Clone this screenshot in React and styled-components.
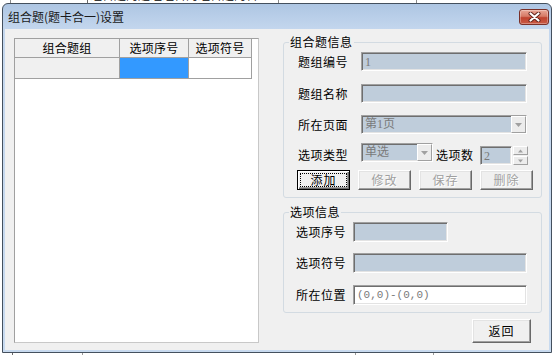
import React from "react";
import styled, { createGlobalStyle } from "styled-components";

const Global = createGlobalStyle`
  html, body { margin: 0; padding: 0; background: #fff; }
  body { font-family: "Noto Sans CJK SC", sans-serif; font-size: 12px; }
  #root { width: 554px; height: 355px; }
`;

const Page = styled.div`
  width: 554px;
  height: 355px;
  overflow: hidden;
  background: #fff;
  display: flex;
  flex-direction: column;
`;

const BackStrip = styled.div`
  flex: none;
  height: ${(p) => p.$h}px;
  display: flex;
  align-items: ${(p) => (p.$bottom ? "flex-end" : "flex-start")};
  overflow: hidden;
`;

const Tick = styled.span`
  flex: none;
  width: 1px;
  height: 100%;
  background: ${(p) => p.$c || "#6a6a6a"};
  margin-left: ${(p) => p.$ml}px;
`;

const BackText = styled.span`
  flex: none;
  width: ${(p) => p.$w}px;
  margin-left: ${(p) => p.$ml}px;
  height: 16px;
  line-height: 16px;
  font-size: 12px;
  color: #000;
  white-space: nowrap;
  overflow: hidden;
`;

const Window = styled.div`
  flex: none;
  margin-left: 2px;
  width: 550px;
  height: 350px;
  box-sizing: border-box;
  border: 1px solid #44505e;
  border-radius: 6px 6px 0 0;
  background: linear-gradient(#aec6e3, #c4d7ee 26px, #c8daef);
  padding: 0 2px 2px;
  display: flex;
  flex-direction: column;
`;

const TitleBar = styled.div`
  flex: none;
  height: 25px;
  display: flex;
  align-items: center;
  justify-content: space-between;
  padding-left: 3px;
`;

const TitleText = styled.span`
  font-size: 12px;
  line-height: 16px;
  color: #1a1a1a;
`;

const CloseBtn = styled.div`
  width: 30px;
  height: 16px;
  box-sizing: border-box;
  margin-top: 1px;
  border: 1px solid #7a3028;
  border-radius: 3px;
  background: linear-gradient(#e9a797, #d67a66 45%, #c0432f 55%, #c85a45);
  box-shadow: inset 0 0 0 1px rgba(255, 255, 255, 0.3);
  display: flex;
  align-items: center;
  justify-content: center;
`;

const Client = styled.div`
  flex: none;
  height: 321px;
  background: #f0f0f0;
  box-sizing: border-box;
  padding: 6px 0 0 9px;
  display: flex;
  align-items: flex-start;
  gap: 24px;
`;

const Grid = styled.div`
  flex: none;
  width: 245px;
  height: 305px;
  margin-top: 3px;
  box-sizing: border-box;
  background: #fff;
  border: 1px solid #a0a0a0;
  border-right-color: #c8c8c8;
  border-bottom-color: #c8c8c8;
  display: grid;
  grid-template-columns: 105px 69px 63px;
  grid-template-rows: 19px 21px;
  align-content: start;
`;

const Cell = styled.div`
  box-sizing: border-box;
  background: ${(p) => p.$bg || "#fff"};
  border-right: 1px solid #a0a0a0;
  border-bottom: 1px solid #a0a0a0;
  display: flex;
  align-items: center;
  justify-content: center;
  font-size: 12px;
  line-height: 14px;
  letter-spacing: 0.3px;
  color: #000;
`;

const RightCol = styled.div`
  flex: none;
  width: 259px;
  display: flex;
  flex-direction: column;
`;

const Group = styled.fieldset`
  margin: ${(p) => p.$mt || 0}px 0 0 0;
  padding: 0;
  height: ${(p) => p.$h}px;
  box-sizing: border-box;
  min-width: 0;
  border: 1px solid #d3dbe2;
  border-radius: 3px;
`;

const GroupBody = styled.div`
  padding: 3px 0 0 ${(p) => p.$pl}px;
  display: flex;
  flex-direction: column;
`;

const Legend = styled.legend`
  margin-left: 5px;
  padding: 0 1px;
  font-size: 12px;
  line-height: 14px;
  letter-spacing: 0.5px;
  color: #000;
`;

const Row = styled.div`
  display: flex;
  align-items: ${(p) => (p.$top ? "flex-start" : "center")};
  margin-top: ${(p) => p.$mt || 0}px;
  gap: ${(p) => p.$gap || 0}px;
`;

const Label = styled.span`
  flex: none;
  width: ${(p) => p.$w}px;
  font-size: 12px;
  line-height: 14px;
  letter-spacing: 0.5px;
  color: #000;
  margin-top: ${(p) => p.$mt || 0}px;
  margin-left: ${(p) => p.$ml || 0}px;
`;

const TextBox = styled.div`
  flex: none;
  width: ${(p) => p.$w}px;
  height: ${(p) => p.$h || 19}px;
  margin-top: ${(p) => p.$mt || 0}px;
  box-sizing: border-box;
  background: ${(p) => (p.$white ? "#fff" : "#bfcddb")};
  border-style: solid;
  border-width: 1px;
  border-color: #a0a0a0 #fff #fff #a0a0a0;
  box-shadow: inset 1px 1px 0 #6e6e6e, inset -1px -1px 0 #e3e3e3;
  padding-left: 3px;
  display: flex;
  align-items: center;
  color: #7a7a7a;
  font-family: ${(p) =>
    p.$mono
      ? '"Liberation Mono", monospace'
      : '"Liberation Serif", "Noto Sans CJK SC", serif'};
  font-size: ${(p) => (p.$mono ? 11 : 12)}px;
  line-height: 14px;
  overflow: hidden;
`;

const ComboText = styled.span`
  flex: 1;
  font-family: "Liberation Serif", "Noto Sans CJK SC", serif;
  font-size: 12px;
  color: #7a7a7a;
  align-self: flex-start;
  margin-top: 1px;
`;

const DropBtn = styled.div`
  flex: none;
  width: 15px;
  height: 100%;
  box-sizing: border-box;
  background: #ececec;
  border-style: solid;
  border-width: 1px;
  border-color: #fff #a0a0a0 #a0a0a0 #fff;
  display: flex;
  align-items: center;
  justify-content: center;
`;

const Spin = styled.div`
  flex: none;
  width: 15px;
  height: 19px;
  margin-left: 1px;
  margin-top: 3px;
  display: flex;
  flex-direction: column;
  gap: 1px;
`;

const SpinBtn = styled.div`
  flex: 1;
  box-sizing: border-box;
  background: #ececec;
  border-style: solid;
  border-width: 1px;
  border-color: #fff #a0a0a0 #a0a0a0 #fff;
  display: flex;
  align-items: center;
  justify-content: center;
`;

const Btn = styled.button`
  flex: none;
  width: ${(p) => p.$w}px;
  height: ${(p) => p.$h}px;
  box-sizing: border-box;
  margin: 0 0 0 ${(p) => p.$ml || 0}px;
  padding: ${(p) => (p.$default ? 2 : 3)}px;
  background: #f0f0f0;
  border: 1px solid;
  border-color: ${(p) =>
    p.$default ? "#000" : "#fff #696969 #696969 #fff"};
  box-shadow: ${(p) =>
    p.$default
      ? "inset 1px 1px 0 #fff, inset -1px -1px 0 #696969, inset -2px -2px 0 #a0a0a0"
      : "inset -1px -1px 0 #a0a0a0, inset 1px 1px 0 #e3e3e3"};
  display: flex;
  align-self: ${(p) => (p.$end ? "flex-end" : "auto")};
  margin-right: ${(p) => p.$mr || 0}px;
  margin-top: ${(p) => p.$mt || 0}px;
  font-family: "Noto Sans CJK SC", sans-serif;
  font-size: 12px;
  letter-spacing: 1px;
  color: ${(p) => (p.disabled ? "#a0a0a0" : "#000")};
  text-shadow: ${(p) => (p.disabled ? "1px 1px 0 #fff" : "none")};
  cursor: default;
`;

const BtnFace = styled.span`
  flex: 1;
  box-sizing: border-box;
  border: 1px dotted ${(p) => (p.$focus ? "#000" : "transparent")};
  display: flex;
  align-items: center;
  justify-content: center;
  line-height: 14px;
`;

const Arrow = ({ up, c = "#a0a0a0", w = 7 }) => (
  <svg width={w} height="4" viewBox="0 0 7 4">
    <path d={up ? "M0 4 L3.5 0 L7 4 Z" : "M0 0 L7 0 L3.5 4 Z"} fill={c} />
  </svg>
);

const CloseX = () => (
  <svg width="13" height="10" viewBox="0 0 13 10">
    <path d="M2.5 1.5 L10.5 8.5 M10.5 1.5 L2.5 8.5" stroke="#5e2018" strokeWidth="4" strokeLinecap="round" />
    <path d="M2.5 1.5 L10.5 8.5 M10.5 1.5 L2.5 8.5" stroke="#fff" strokeWidth="2.2" strokeLinecap="round" />
  </svg>
);

export default function App() {
  return (
    <>
      <Global />
      <Page>
        <BackStrip $h={3} $bottom>
          <Tick $ml={10} $c="#8a8a8a" />
          <Tick $ml={76} />
          <BackText $ml={2} $w={188}>组合题的题组组合的组合题的合</BackText>
          <Tick $ml={0} $c="#8a8a8a" />
          <Tick $ml={137} $c="#8a8a8a" />
        </BackStrip>
        <Window>
          <TitleBar>
            <TitleText>组合题(题卡合一)设置</TitleText>
            <CloseBtn>
              <CloseX />
            </CloseBtn>
          </TitleBar>
          <Client>
            <Grid>
              <Cell $bg="#f0f0f0">组合题组</Cell>
              <Cell $bg="#f0f0f0">选项序号</Cell>
              <Cell $bg="#f0f0f0">选项符号</Cell>
              <Cell $bg="#f0f0f0" />
              <Cell $bg="#3399ff" />
              <Cell $bg="#fff" />
            </Grid>
            <RightCol>
              <Group $h={163}>
                <Legend>组合题信息</Legend>
                <GroupBody $pl={14}>
                  <Row>
                    <Label $w={63}>题组编号</Label>
                    <TextBox $w={166}>1</TextBox>
                  </Row>
                  <Row $mt={13}>
                    <Label $w={63}>题组名称</Label>
                    <TextBox $w={166} />
                  </Row>
                  <Row $mt={12}>
                    <Label $w={63}>所在页面</Label>
                    <TextBox $w={166}>
                      <ComboText>第1页</ComboText>
                      <DropBtn>
                        <Arrow />
                      </DropBtn>
                    </TextBox>
                  </Row>
                  <Row $mt={9} $top>
                    <Label $w={63} $mt={5}>选项类型</Label>
                    <TextBox $w={72}>
                      <ComboText>单选</ComboText>
                      <DropBtn>
                        <Arrow />
                      </DropBtn>
                    </TextBox>
                    <Label $w={44} $ml={3} $mt={5}>选项数</Label>
                    <TextBox $w={32} $mt={3}>2</TextBox>
                    <Spin>
                      <SpinBtn>
                        <Arrow up w={5} />
                      </SpinBtn>
                      <SpinBtn>
                        <Arrow w={5} />
                      </SpinBtn>
                    </Spin>
                  </Row>
                  <Row $mt={5} $gap={8}>
                    <Btn $w={53} $h={20} $ml={-1} $default>
                      <BtnFace $focus>添加</BtnFace>
                    </Btn>
                    <Btn $w={53} $h={20} disabled>
                      <BtnFace>修改</BtnFace>
                    </Btn>
                    <Btn $w={53} $h={20} disabled>
                      <BtnFace>保存</BtnFace>
                    </Btn>
                    <Btn $w={53} $h={20} disabled>
                      <BtnFace>删除</BtnFace>
                    </Btn>
                  </Row>
                </GroupBody>
              </Group>
              <Group $h={108} $mt={7}>
                <Legend>选项信息</Legend>
                <GroupBody $pl={12}>
                  <Row>
                    <Label $w={57}>选项序号</Label>
                    <TextBox $w={95} $h={20} />
                  </Row>
                  <Row $mt={11}>
                    <Label $w={57}>选项符号</Label>
                    <TextBox $w={174} $h={20} />
                  </Row>
                  <Row $mt={12}>
                    <Label $w={57}>所在位置</Label>
                    <TextBox $w={174} $h={20} $white $mono>
                      (0,0)-(0,0)
                    </TextBox>
                  </Row>
                </GroupBody>
              </Group>
              <Btn $w={59} $h={24} $end $mr={11} $mt={6}>
                <BtnFace>返回</BtnFace>
              </Btn>
            </RightCol>
          </Client>
        </Window>
        <BackStrip $h={3}>
          <Tick $ml={12} />
          <Tick $ml={69} $c="#9a9a9a" />
          <Tick $ml={272} $c="#9a9a9a" />
          <Tick $ml={77} $c="#9a9a9a" />
        </BackStrip>
      </Page>
    </>
  );
}
